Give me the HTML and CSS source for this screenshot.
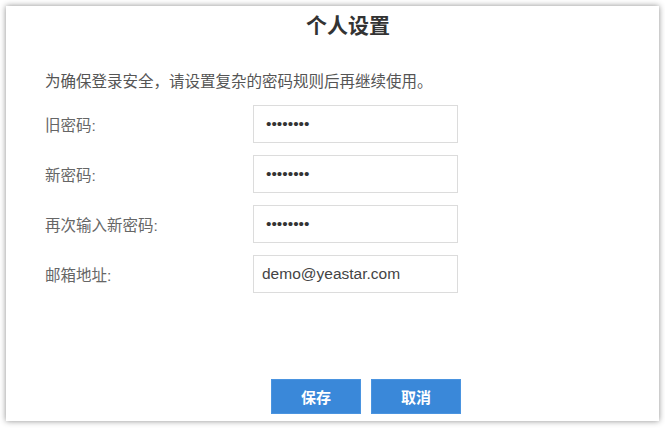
FILE: index.html
```html
<!DOCTYPE html>
<html lang="zh-CN">
<head>
<meta charset="utf-8">
<title>个人设置</title>
<link rel="stylesheet" href="styles.css">
</head>
<body>
<div class="card">
  <h1 class="title">个人设置</h1>
  <p class="desc">为确保登录安全，请设置复杂的密码规则后再继续使用。</p>
  <form class="form">
    <div class="row">
      <label class="label">旧密码:</label>
      <input class="field pwd" type="password" value="12345678">
    </div>
    <div class="row">
      <label class="label">新密码:</label>
      <input class="field pwd" type="password" value="12345678">
    </div>
    <div class="row">
      <label class="label">再次输入新密码:</label>
      <input class="field pwd" type="password" value="12345678">
    </div>
    <div class="row">
      <label class="label">邮箱地址:</label>
      <input class="field" type="text" value="demo@yeastar.com">
    </div>
  </form>
  <div class="actions">
    <button class="btn" type="button">保存</button>
    <button class="btn" type="button">取消</button>
  </div>
</div>
</body>
</html>
```
FILE: styles.css
```css
html, body {
  margin: 0;
  padding: 0;
  background: #ffffff;
}
body {
  font-family: "Liberation Sans", "Noto Sans CJK SC", sans-serif;
  width: 665px;
  height: 428px;
  overflow: hidden;
}
.card {
  box-sizing: border-box;
  margin: 6px 0 0 6px;
  width: 653px;
  height: 415px;
  background: #ffffff;
  box-shadow: 0 0 6px rgba(0, 0, 0, 0.45);
  padding: 8px 0 0 39px;
}
.title {
  margin: 0;
  text-align: center;
  font-size: 21px;
  line-height: 24px;
  font-weight: bold;
  color: #333333;
  width: 606px;
}
.desc {
  margin: 34px 0 0 0;
  font-size: 15.5px;
  line-height: 20px;
  color: #555555;
}
.form {
  margin-top: 13px;
  display: flex;
  flex-direction: column;
  gap: 12px;
}
.row {
  display: flex;
  align-items: center;
  height: 38px;
}
.label {
  width: 208px;
  font-size: 15.5px;
  color: #666666;
}
.field {
  box-sizing: border-box;
  width: 205px;
  height: 38px;
  border: 1px solid #dcdcdc;
  padding: 0 8px;
  margin: 0;
  font-family: "Liberation Sans", sans-serif;
  font-size: 15.5px;
  color: #444444;
  outline: none;
}
.pwd {
  padding-left: 12px;
  color: #333333;
}
.actions {
  margin-top: 86px;
  padding-left: 226px;
  display: flex;
  gap: 10px;
}
.btn {
  width: 90px;
  height: 35px;
  background: #3a88d9;
  border: 1px solid #4a94e0;
  color: #ffffff;
  font-family: "Liberation Sans", "Noto Sans CJK SC", sans-serif;
  font-size: 15px;
  font-weight: bold;
  padding: 0;
  margin: 0;
}
```
